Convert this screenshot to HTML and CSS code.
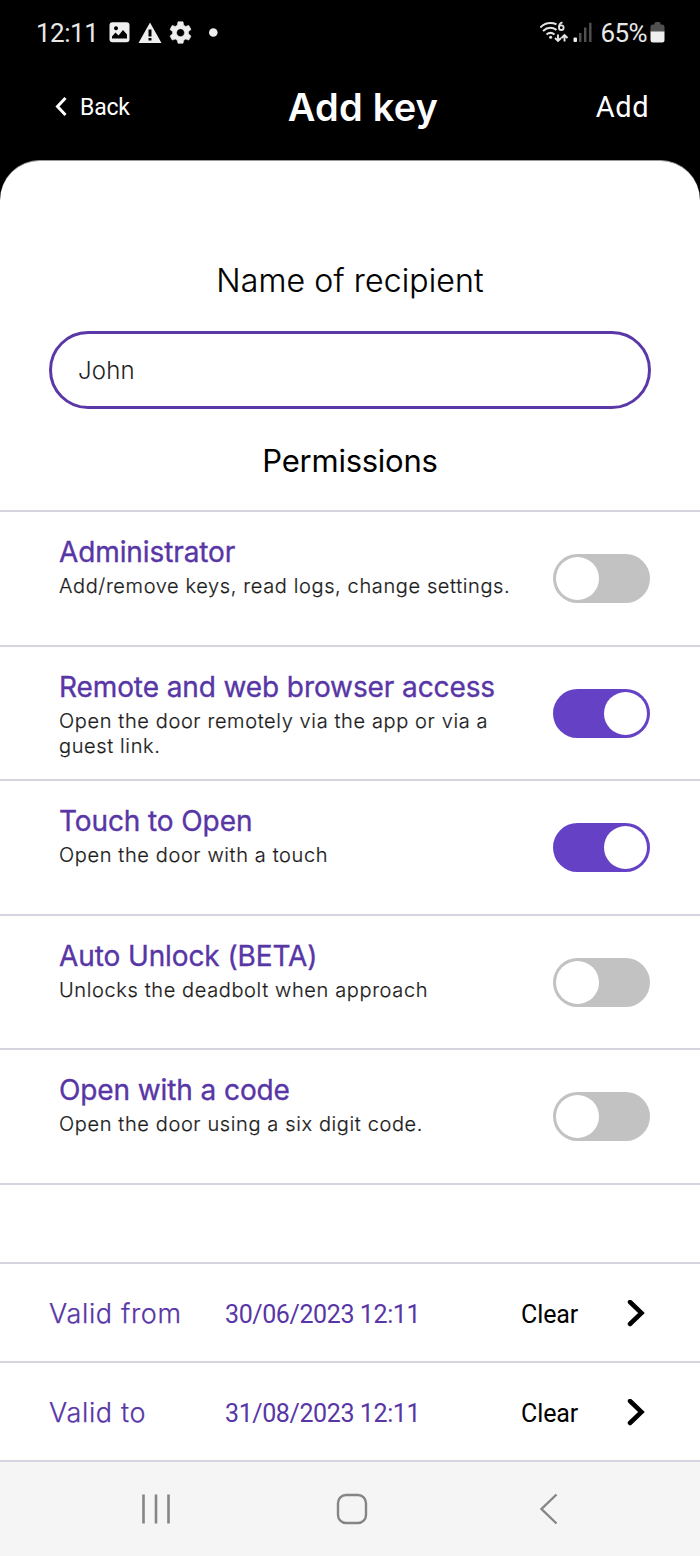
FILE: index.html
```
<!DOCTYPE html>
<html lang="en">

<head>
    <meta charset="utf-8">
    <title>Add key</title>
    <link rel="stylesheet" href="styles.css">
</head>

<body>
    <div class="top">
        <div class="statusBar">
            <span class="clock">12:11</span>
            <svg class="statusIcons" width="112" height="24" viewBox="0 0 112 24">
                <!-- picture -->
                <path fill="#eee" fill-rule="evenodd" d="M4.500 1.300h14a3 3 0 0 1 3 3v14a3 3 0 0 1-3 3h-14a3 3 0 0 1-3-3v-14a3 3 0 0 1 3-3zM4 17.500h15v-4l-4-4.500-4.500 5.500-3-3L4 15.500zM8 5.300a2 2 0 1 0 .01 0z"/>
                <!-- warning -->
                <path fill="#eee" fill-rule="evenodd" d="M42 1.500 53.500 22h-23zM40.500 8.500v7h3v-7zm0 8.500v2.500h3V17z"/>
                <!-- settings -->
                <path fill="#eee" fill-rule="evenodd" stroke="#eee" stroke-width=".6" stroke-linejoin="round" d="M70 .8h5l.7 3.400 2 1.200 3.100-1 2.200 4-2.600 2.300v2.100l2.600 2.300-2.200 4-3.100-1-2 1.200-.7 3h-5l-.7-3-2-1.200-3.100 1-2.200-4 2.600-2.300v-2.100L62 8.400l2.200-4 3.100 1 2-1.200zM72.500 7.700a4 4 0 1 0 .01 0z"/>
                <circle fill="#eee" cx="105.300" cy="11.500" r="4.300"/>
            </svg>
            <div class="statusRight">
                <svg width="54" height="24" viewBox="0 0 54 24">
                    <!-- wifi -->
                    <g fill="none" stroke="#e4e4e4" stroke-width="2">
                        <path d="M.300 6.500C5 1.800 11 1.300 16.500 3.200M3 10c4-3.600 9-4 13.500-1.200M6.500 13.500c2.500-2 5.500-2 8 0"/>
                        <path d="M18 13.500v6.500m-3-3L18 20l3-3M24.500 20.500V14M21.500 17l3-3 3 3" stroke-width="1.900"/>
                        <path d="M22.500 1.300c-2.300.7-3.500 2.700-3.500 5" stroke-width="1.800"/>
                        <circle cx="21.300" cy="6.700" r="2.300" stroke-width="1.800"/>
                    </g>
                    <circle fill="#e4e4e4" cx="10.600" cy="16.300" r="1.500"/>
                    <!-- signal -->
                    <rect fill="#eee" x="33.500" y="16.500" width="3.500" height="4.500" rx="1"/>
                    <path stroke="#505050" stroke-width="2.400" d="M40.200 12v9M45.200 6.500V21M50.300 1.800V21"/>
                </svg>
                <span class="percent">65%</span>
                <svg width="15" height="22" viewBox="0 0 15 22">
                    <path fill="#505050" d="M4.500 1.500q0-1.500 1.500-1.500h3q1.500 0 1.500 1.500v1H12q2.500 0 2.500 2.500v5H.500V5Q.500 2.500 3 2.500h1.500z"/>
                    <path fill="#eee" d="M.500 9.500h14V18q0 2.500-2.500 2.500H3Q.500 20.500.500 18z"/>
                </svg>
            </div>
        </div>
        <div class="header">
            <div class="back">
                <svg width="12" height="20" viewBox="0 0 12 20"><path fill="none" stroke="#fff" stroke-width="3" d="M10.500 1 2.500 9.500l8 8.500"/></svg>
                <span>Back</span>
            </div>
            <h1>Add key</h1>
            <div class="add">Add</div>
        </div>
    </div>

    <div class="sheet">
        <h2 class="nameTitle">Name of recipient</h2>
        <input class="nameInput" type="text" name="recipient" value="John">
        <h2 class="permTitle">Permissions</h2>

        <div class="permission">
            <div class="permText">
                <h3>Administrator</h3>
                <p>Add/remove keys, read logs, change settings.</p>
            </div>
            <div class="toggle"></div>
        </div>
        <div class="permission">
            <div class="permText">
                <h3>Remote and web browser access</h3>
                <p>Open the door remotely via the app or via a guest link.</p>
            </div>
            <div class="toggle on"></div>
        </div>
        <div class="permission">
            <div class="permText">
                <h3>Touch to Open</h3>
                <p>Open the door with a touch</p>
            </div>
            <div class="toggle on"></div>
        </div>
        <div class="permission">
            <div class="permText">
                <h3>Auto Unlock (BETA)</h3>
                <p>Unlocks the deadbolt when approach</p>
            </div>
            <div class="toggle"></div>
        </div>
        <div class="permission">
            <div class="permText">
                <h3>Open with a code</h3>
                <p>Open the door using a six digit code.</p>
            </div>
            <div class="toggle"></div>
        </div>

        <div class="spacer"></div>

        <div class="valid">
            <span class="validLabel">Valid from</span>
            <span class="date">30/06/2023 12:11</span>
            <span class="clear">Clear</span>
            <svg width="18" height="28" viewBox="0 0 18 28"><path fill="none" stroke="#000" stroke-width="4.500" stroke-linecap="round" d="M3 2 14.500 13 3 24"/></svg>
        </div>
        <div class="valid">
            <span class="validLabel">Valid to</span>
            <span class="date">31/08/2023 12:11</span>
            <span class="clear">Clear</span>
            <svg width="18" height="28" viewBox="0 0 18 28"><path fill="none" stroke="#000" stroke-width="4.500" stroke-linecap="round" d="M3 2 14.500 13 3 24"/></svg>
        </div>
    </div>

    <div class="navBar">
        <svg width="30" height="32" viewBox="0 0 30 32"><path stroke="#858585" stroke-width="2.600" d="M2.500 1.500v29M15 1.500v29M27.500 1.500v29"/></svg>
        <svg class="home" width="32" height="32" viewBox="0 0 32 32"><rect fill="none" stroke="#858585" stroke-width="2.400" x="2" y="2" width="28" height="28" rx="8"/></svg>
        <svg width="20" height="32" viewBox="0 0 20 32"><path fill="none" stroke="#858585" stroke-width="2.400" d="M17.500 1.500 2.500 16l15 14.500"/></svg>
    </div>
</body>

</html>
```
FILE: styles.css
```
* {box-sizing: border-box;}
body {
    margin: 0;
    width: 700px;
    height: 1556px;
    overflow: hidden;
    background: black;
    color: black;
    font-family: Inter, "Liberation Sans", sans-serif;
}
h1, h2, h3, p {margin: 0;}
svg {display: block;}

/* black area */
.top {
    height: 160px;
    color: white;
    font-family: Roboto, sans-serif;
}
.statusBar {
    display: flex;
    align-items: center;
    height: 66px;
    padding: 0 35px 0 36px;
    color: #e8e8e8;
    font-size: 26px;
}
.clock {width: 72px; letter-spacing: -0.5px;}
.statusRight {
    display: flex;
    align-items: center;
    margin-left: auto;
}
.percent {margin: 0 3px 0 7px; letter-spacing: -0.6px;}
.header {
    display: grid;
    grid-template-columns: 1fr 150px 1fr;
    align-items: center;
    height: 82px;
    padding: 0 51px 0 55px;
}
.back {
    display: flex;
    align-items: center;
    gap: 13px;
    font-size: 23px;
    letter-spacing: -0.2px;
}
h1 {
    margin: 0 -13px 0 9px;
    font: 600 38px/46px Inter, sans-serif;
    letter-spacing: 0.2px;
    text-align: center;
    white-space: nowrap;
}
.add {text-align: right; font-size: 29px; letter-spacing: 0.5px;}

/* white sheet */
.sheet {
    height: 1300px;
    padding-top: 98px;
    border-top: 1px solid #999;
    border-radius: 40px 40px 0 0;
    background: white;
}
h2 {
    height: 44px;
    text-align: center;
    font-size: 32px;
    line-height: 44px;
    font-weight: 300;
    letter-spacing: 0.15px;
}
.nameTitle {-webkit-text-stroke: 0.2px black;}
.nameInput {
    display: block;
    width: 602px;
    height: 78px;
    margin: 28px 49px 30px;
    padding: 0 26px;
    border: 3px solid #5a38a8;
    border-radius: 39px;
    background: white;
    color: #222;
    font: 300 24px Inter, sans-serif;
    letter-spacing: 0.15px;
    outline: none;
}
.permTitle {font-weight: 400; font-size: 31px; margin-bottom: 27.400px; letter-spacing: -0.25px;}

.permission {
    display: flex;
    justify-content: space-between;
    height: 134.5px;
    padding: 22px 50px 0 59px;
    border-top: 2px solid #d5d4df;
}
.permText {width: 465px;}
h3 {
    color: #5836a6;
    font-size: 28px;
    line-height: 36px;
    font-weight: 400;
    letter-spacing: -0.1px;
    -webkit-text-stroke: 0.35px #5836a6;
}
p {
    margin-top: 4px;
    color: #1c1c1c;
    font-size: 20px;
    line-height: 25px;
    font-weight: 300;
    letter-spacing: 0.62px;
    -webkit-text-stroke: 0.2px #1c1c1c;
}
.toggle {
    display: flex;
    width: 97px;
    height: 49px;
    margin-top: 20px;
    padding: 3px;
    border-radius: 25px;
    background: #c2c2c2;
}
.toggle::before {
    content: "";
    width: 43px;
    height: 43px;
    border-radius: 50%;
    background: white;
}
.on {justify-content: flex-end; background: #6542c5;}

.spacer {height: 79.200px; border-top: 2px solid #d5d4df;}
.valid {
    display: flex;
    align-items: center;
    height: 99.200px;
    padding: 3px 0 0 49px;
    border-top: 2px solid #d5d4df;
    font: 25px Roboto, sans-serif;
}
.validLabel {
    width: 176px;
    margin-top: -2px;
    color: #5836a6;
    font: 300 27px Inter, sans-serif;
    letter-spacing: 0.65px;
    -webkit-text-stroke: 0.25px #5836a6;
}
.date {width: 296px; color: #5836a6; letter-spacing: -0.4px;}
.clear {width: 106px; letter-spacing: -0.1px;}

.navBar {
    display: flex;
    align-items: center;
    justify-content: space-between;
    height: 96px;
    padding: 0 141px 1px;
    border-top: 2px solid #d5d4df;
    background: #f5f5f5;
}
.home {margin-left: -7px;}
```
